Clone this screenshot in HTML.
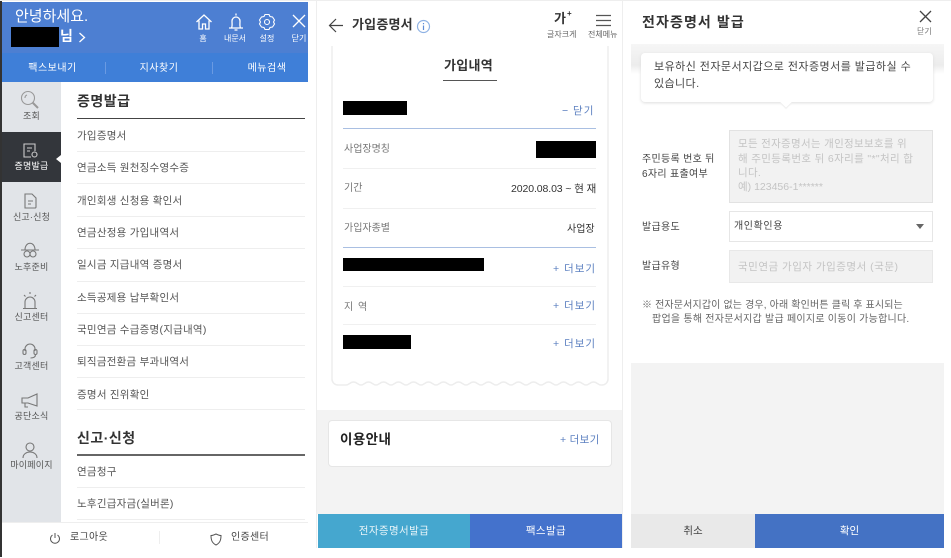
<!DOCTYPE html>
<html lang="ko"><head><meta charset="utf-8"><style>
html,body{margin:0;padding:0;background:#fff}
body{position:relative;width:951px;height:557px;overflow:hidden;font-family:"Liberation Sans","Noto Sans CJK KR",sans-serif;color:#444}
#p{position:absolute;left:0;top:0;width:951px;height:557px;filter:blur(.35px)}
#p div,#p svg{position:absolute}
.t{white-space:nowrap;line-height:1}
.c{text-align:center}
.m{left:77px;font-size:10.500px;color:#555;letter-spacing:.25px}
.l{left:77px;width:228px;height:1px;background:#eeeeee}
.s{left:2px;width:59px;text-align:center;font-size:9px;color:#555;white-space:nowrap;line-height:1;letter-spacing:.2px}
.b{background:#000}
.more{font-size:10.500px;color:#5b7fc0;white-space:nowrap;line-height:1;letter-spacing:1px}
.g{font-size:10px;color:#777;white-space:nowrap;line-height:1}
svg{fill:none}
</style></head><body><div id="p">
<!-- left panel -->
<div style="left:0;top:0;width:2px;height:557px;background:#333"></div>
<div style="left:0;top:0;width:951px;height:1px;background:#eee"></div>
<div style="left:2px;top:2px;width:306px;height:51px;background:#4d7fd2"></div>
<div style="left:2px;top:53px;width:306px;height:29px;background:#3f7fd8"></div>
<div class="t" style="left:15px;top:9px;font-size:15px;color:#fff">안녕하세요.</div>
<div class="b" style="left:11px;top:27px;width:48px;height:20px"></div>
<div class="t" style="left:60px;top:29px;font-size:14px;color:#fff;font-weight:bold">님</div>
<svg style="left:78px;top:32px" width="8" height="11" stroke="#fff" stroke-width="1.300"><path d="M1.500 1l5 4.500-5 4.500"/></svg>
<svg style="left:195px;top:13px" width="18" height="18" stroke="#fff" stroke-width="1.300"><path d="M1.500 9 9 2l7.500 7M4 7.500V16h3.500v-5h3v5H14V7.500"/></svg>
<svg style="left:227px;top:12px" width="18" height="19" stroke="#fff" stroke-width="1.300"><path d="M2 16h14M4.500 16c1-2 .5-4 .5-7a4 4 0 0 1 8 0c0 3-.5 5 .5 7M9 1.500v2M7.500 18h3"/></svg>
<svg style="left:258px;top:13px" width="18" height="18" stroke="#fff" stroke-width="1.100"><path d="M7 1.500h4l1 2 2.500.5 2 3-1 2 1 2-2 3-2.500.5-1 2H7l-1-2-2.500-.5-2-3 1-2-1-2 2-3L6 3.500z"/><circle cx="9" cy="9" r="2.500"/></svg>
<svg style="left:292px;top:14px" width="14" height="14" stroke="#fff" stroke-width="1.300"><path d="M1 1l12 12M13 1 1 13"/></svg>
<div class="t c" style="left:193px;top:35px;width:20px;font-size:8px;color:#fff">홈</div>
<div class="t c" style="left:220px;top:35px;width:30px;font-size:8px;color:#fff">내문서</div>
<div class="t c" style="left:252px;top:35px;width:30px;font-size:8px;color:#fff">설정</div>
<div class="t c" style="left:288px;top:35px;width:22px;font-size:8px;color:#fff">닫기</div>
<div class="t c" style="left:10px;top:64px;width:85px;font-size:10px;color:#fff;letter-spacing:.5px">팩스보내기</div>
<div class="t c" style="left:115px;top:64px;width:88px;font-size:10px;color:#fff;letter-spacing:.5px">지사찾기</div>
<div class="t c" style="left:224px;top:64px;width:86px;font-size:10px;color:#fff;letter-spacing:.5px">메뉴검색</div>
<div style="left:105px;top:62px;width:1px;height:12px;background:#6a9ae2"></div>
<div style="left:212px;top:62px;width:1px;height:12px;background:#6a9ae2"></div>
<!-- sidebar -->
<div style="left:2px;top:82px;width:59px;height:440px;background:#e1e4e8"></div>
<div style="left:2px;top:132px;width:59px;height:50px;background:#33363b"></div>
<div style="left:56px;top:155px;width:0;height:0;border-top:4px solid transparent;border-bottom:4px solid transparent;border-right:5px solid #fff"></div>
<svg style="left:20px;top:90px" width="20" height="20" stroke="#999" stroke-width="1.100"><circle cx="8" cy="8" r="6.500"/><path d="M5 8a3 3 0 0 1 2-3"/><path d="M12.500 12.500 18 18" stroke-width="2"/></svg>
<div class="s" style="top:112px">조회</div>
<svg style="left:22px;top:142px" width="18" height="18" stroke="#ccc" stroke-width="1.100"><path d="M9 15H2V2h11v7M5 6h5M5 9h3"/><circle cx="12.500" cy="12.500" r="2.500"/></svg>
<div class="s" style="top:162px;color:#fff">증명발급</div>
<svg style="left:23px;top:192px" width="15" height="17" stroke="#777" stroke-width="1.100"><path d="M2 2h7l4 4v9a1 1 0 0 1-1 1H2zM5 9h5M5 12h3"/></svg>
<div class="s" style="top:213px">신고·신청</div>
<svg style="left:20px;top:242px" width="20" height="17" stroke="#777" stroke-width="1.100"><path d="M1 8h18M5 8c0-9 10-9 10 0"/><circle cx="7" cy="12" r="3"/><circle cx="13" cy="12" r="3"/></svg>
<div class="s" style="top:263px">노후준비</div>
<svg style="left:20px;top:291px" width="20" height="20" stroke="#777" stroke-width="1.100"><path d="M5 17V11a5 5 0 0 1 10 0v6M3 17.500h14M10 1v2M4 4l1.500 1.500M16 4l-1.500 1.500"/></svg>
<div class="s" style="top:313px">신고센터</div>
<svg style="left:21px;top:342px" width="18" height="18" stroke="#777" stroke-width="1.100"><path d="M4 9V7a5 5 0 0 1 10 0v2"/><rect x="2" y="7.500" width="3" height="5" rx="1.500"/><rect x="13" y="7.500" width="3" height="5" rx="1.500"/><path d="M14.500 12.500c0 2.500-2 3.500-5 3.500"/></svg>
<div class="s" style="top:362px">고객센터</div>
<svg style="left:21px;top:393px" width="18" height="16" stroke="#777" stroke-width="1.100"><path d="M1 5h6l9-4v12l-9-3H1zM4 10v4h3"/></svg>
<div class="s" style="top:412px">공단소식</div>
<svg style="left:21px;top:441px" width="18" height="18" stroke="#777" stroke-width="1.100"><circle cx="9" cy="6" r="4"/><path d="M2 17c0-8 14-8 14 0"/></svg>
<div class="s" style="top:461px">마이페이지</div>
<!-- menu -->
<div class="t" style="left:77px;top:94px;font-size:14px;font-weight:bold;color:#333;letter-spacing:.5px">증명발급</div>
<div style="left:77px;top:118px;width:228px;height:1px;background:#444"></div>
<div class="t m" style="top:131px">가입증명서</div><div class="l" style="top:151px"></div>
<div class="t m" style="top:163px">연금소득 원천징수영수증</div><div class="l" style="top:183px"></div>
<div class="t m" style="top:196px">개인회생 신청용 확인서</div><div class="l" style="top:216px"></div>
<div class="t m" style="top:228px">연금산정용 가입내역서</div><div class="l" style="top:248px"></div>
<div class="t m" style="top:260px">일시금 지급내역 증명서</div><div class="l" style="top:281px"></div>
<div class="t m" style="top:293px">소득공제용 납부확인서</div><div class="l" style="top:313px"></div>
<div class="t m" style="top:325px">국민연금 수급증명(지급내역)</div><div class="l" style="top:345px"></div>
<div class="t m" style="top:357px">퇴직금전환금 부과내역서</div><div class="l" style="top:377px"></div>
<div class="t m" style="top:390px">증명서 진위확인</div><div class="l" style="top:409px"></div>
<div class="t" style="left:77px;top:431px;font-size:14px;font-weight:bold;color:#333;letter-spacing:.5px">신고·신청</div>
<div style="left:77px;top:454px;width:228px;height:2px;background:#666"></div>
<div class="t m" style="top:467px">연금청구</div><div class="l" style="top:487px"></div>
<div class="t m" style="top:499px">노후긴급자금(실버론)</div><div class="l" style="top:519px"></div>
<div style="left:2px;top:522px;width:306px;height:35px;background:#fff;border-top:1px solid #eee"></div>
<svg style="left:49px;top:532px" width="12" height="13" stroke="#555" stroke-width="1"><path d="M6 1v5M3.500 3a4.500 4.500 0 1 0 5 0"/></svg>
<div class="t" style="left:70px;top:533px;font-size:10px;color:#444;letter-spacing:.3px">로그아웃</div>
<div style="left:159px;top:531px;width:1px;height:13px;background:#eee"></div>
<svg style="left:210px;top:533px" width="12" height="13" stroke="#555" stroke-width="1"><path d="M6 1c2 1 3 1.500 5 1.500C11 7 10 10 6 12 2 10 1 7 1 2.500 3 2.500 4 2 6 1z"/></svg>
<div class="t" style="left:231px;top:533px;font-size:10px;color:#444;letter-spacing:.3px">인증센터</div>

<!-- middle panel -->
<div style="left:316px;top:0;width:1px;height:548px;background:#eee"></div>
<div style="left:622px;top:0;width:1px;height:548px;background:#eee"></div>
<svg style="left:328px;top:18px" width="16" height="15" stroke="#444" stroke-width="1.200"><path d="M15 7.500H1.500M8 1 1.500 7.500 8 14"/></svg>
<div class="t" style="left:352px;top:18px;font-size:13px;font-weight:bold;color:#333;letter-spacing:.2px">가입증명서</div>
<svg style="left:416px;top:19px" width="15" height="15" stroke="#8fb2e4" stroke-width="1.200"><circle cx="7.500" cy="7.500" r="6"/><path d="M7.500 6.500v4.500M7.500 4v1.200" stroke="#5e8cd6"/></svg>
<div class="t" style="left:554px;top:12px;font-size:13px;font-weight:bold;color:#333">가</div>
<div class="t" style="left:567px;top:10px;font-size:8px;font-weight:bold;color:#333">+</div>
<div class="t" style="left:547px;top:31px;font-size:8px;color:#666">글자크게</div>
<svg style="left:596px;top:14px" width="15" height="13" stroke="#555" stroke-width="1.300"><path d="M0 1.500h15M0 6.500h15M0 11.500h15"/></svg>
<div class="t" style="left:588px;top:31px;font-size:8px;color:#666">전체메뉴</div>
<svg style="left:325px;top:40px" width="290" height="350" stroke="#ededed" stroke-width="1.500"><path d="M7 6V339a6 6 0 0 0 6 6h8c3 0 4-3 7.500-3s4.500 3 7.500 3c3 0 4-3 7.500-3s4.500 3 7.500 3c3 0 4-3 7.500-3s4.500 3 7.500 3c3 0 4-3 7.500-3s4.500 3 7.500 3c3 0 4-3 7.500-3s4.500 3 7.500 3c3 0 4-3 7.500-3s4.500 3 7.500 3c3 0 4-3 7.500-3s4.500 3 7.500 3c3 0 4-3 7.500-3s4.500 3 7.500 3c3 0 4-3 7.500-3s4.500 3 7.500 3c3 0 4-3 7.500-3s4.500 3 7.500 3c3 0 4-3 7.500-3s4.500 3 7.500 3c3 0 4-3 7.500-3s4.500 3 7.500 3c3 0 4-3 7.500-3s4.500 3 7.500 3c3 0 4-3 7.500-3s4.500 3 7.500 3c3 0 4-3 7.500-3s4.500 3 7.500 3c3 0 4-3 7.500-3s4.500 3 7.500 3c3 0 4-3 7.500-3s4.500 3 7.500 3h1a6 6 0 0 0 6-6V6"/></svg>
<div class="t" style="left:444px;top:59px;font-size:13px;font-weight:bold;color:#333;letter-spacing:.3px">가입내역</div>
<div style="left:443px;top:80px;width:54px;height:1px;background:#555"></div>
<div class="b" style="left:343px;top:101px;width:64px;height:14px"></div>
<div class="more" style="left:562px;top:106px">− 닫기</div>
<div style="left:343px;top:128px;width:253px;height:1px;background:#a9bfe2"></div>
<div class="g" style="left:344px;top:145px">사업장명칭</div>
<div class="b" style="left:536px;top:141px;width:60px;height:17px"></div>
<div style="left:343px;top:168px;width:253px;height:1px;background:#f0f0f0"></div>
<div class="g" style="left:344px;top:184px">기간</div>
<div class="t" style="left:511px;top:184px;font-size:10.500px;color:#333;letter-spacing:-.1px">2020.08.03 ~ 현 재</div>
<div style="left:343px;top:208px;width:253px;height:1px;background:#f0f0f0"></div>
<div class="g" style="left:344px;top:224px">가입자종별</div>
<div class="t" style="left:567px;top:225px;font-size:10px;color:#333">사업장</div>
<div style="left:343px;top:247px;width:253px;height:1px;background:#a9bfe2"></div>
<div class="b" style="left:343px;top:258px;width:141px;height:13px"></div>
<div class="more" style="left:553px;top:264px">+ 더보기</div>
<div style="left:343px;top:286px;width:253px;height:1px;background:#f0f0f0"></div>
<div class="g" style="left:344px;top:303px;letter-spacing:1px">지 역</div>
<div class="more" style="left:553px;top:301px">+ 더보기</div>
<div style="left:343px;top:324px;width:253px;height:1px;background:#f0f0f0"></div>
<div class="b" style="left:343px;top:335px;width:68px;height:14px"></div>
<div class="more" style="left:553px;top:339px">+ 더보기</div>
<div style="left:317px;top:410px;width:305px;height:104px;background:#f3f3f3"></div>
<div style="left:328px;top:420px;width:284px;height:47px;background:#fff;border:1px solid #e6e6e6;border-radius:4px;box-sizing:border-box"></div>
<div class="t" style="left:340px;top:433px;font-size:13.500px;font-weight:bold;color:#222;letter-spacing:.4px">이용안내</div>
<div class="t" style="left:560px;top:435px;font-size:10.500px;color:#5b7fc0;letter-spacing:.3px">+ 더보기</div>
<div class="t c" style="left:318px;top:514px;width:152px;height:34px;line-height:34px;background:#45a7cf;color:#e8f4f8;font-size:10.500px;letter-spacing:.4px">전자증명서발급</div>
<div class="t c" style="left:470px;top:514px;width:152px;height:34px;line-height:34px;background:#4472cc;color:#fff;font-size:10.500px;letter-spacing:.4px">팩스발급</div>

<!-- right panel -->
<div class="t" style="left:642px;top:15px;font-size:14px;font-weight:bold;color:#333;letter-spacing:1.100px">전자증명서 발급</div>
<svg style="left:919px;top:10px" width="13" height="13" stroke="#444" stroke-width="1.300"><path d="M1 1l11 11M12 1 1 12"/></svg>
<div class="t" style="left:917px;top:28px;font-size:8px;color:#777">닫기</div>
<div style="left:631px;top:44px;width:313px;height:30px;background:linear-gradient(#f6f6f6,#ececec 70%,#fff)"></div>
<div style="left:641px;top:53px;width:292px;height:49px;background:#fff;border-radius:4px;box-shadow:0 1px 3px #ddd"></div>
<div style="left:782px;top:98px;width:8px;height:8px;background:#fff;transform:rotate(45deg);box-shadow:1px 1px 1px #eee"></div>
<div class="t" style="left:654px;top:62px;font-size:11px;color:#444;letter-spacing:.45px">보유하신 전자문서지갑으로 전자증명서를 발급하실 수</div>
<div class="t" style="left:654px;top:79px;font-size:11px;color:#444;letter-spacing:.4px">있습니다.</div>
<div style="left:729px;top:130px;width:204px;height:73px;background:#f2f2f2;border:1px solid #e2e2e2;box-sizing:border-box"></div>
<div class="t" style="left:738px;top:139px;font-size:10.500px;color:#c4c4c4;letter-spacing:.3px">모든 전자증명서는 개인정보보호를 위</div>
<div class="t" style="left:738px;top:154px;font-size:10.500px;color:#c4c4c4;letter-spacing:.35px">해 주민등록번호 뒤 6자리를 "*"처리 합</div>
<div class="t" style="left:738px;top:168px;font-size:10.500px;color:#c4c4c4;letter-spacing:.3px">니다.</div>
<div class="t" style="left:738px;top:182px;font-size:10.500px;color:#c4c4c4">예) 123456-1******</div>
<div class="t" style="left:642px;top:155px;font-size:10px;color:#444;letter-spacing:.3px">주민등록 번호 뒤</div>
<div class="t" style="left:642px;top:170px;font-size:10px;color:#444;letter-spacing:.3px">6자리 표출여부</div>
<div class="t" style="left:642px;top:223px;font-size:10px;color:#444;letter-spacing:.3px">발급용도</div>
<div style="left:729px;top:211px;width:204px;height:31px;background:#fff;border:1px solid #e6e6e6;box-sizing:border-box"></div>
<div class="t" style="left:734px;top:222px;font-size:10px;color:#444;letter-spacing:.6px">개인확인용</div>
<div style="left:916px;top:224px;width:0;height:0;border-left:4px solid transparent;border-right:4px solid transparent;border-top:5px solid #666"></div>
<div class="t" style="left:642px;top:262px;font-size:10px;color:#444;letter-spacing:.3px">발급유형</div>
<div style="left:729px;top:250px;width:204px;height:33px;background:#f2f2f2;border:1px solid #e8e8e8;box-sizing:border-box"></div>
<div class="t" style="left:738px;top:262px;font-size:10.500px;color:#c4c4c4;letter-spacing:.5px">국민연금 가입자 가입증명서 (국문)</div>
<div class="t" style="left:642px;top:301px;font-size:10px;color:#666;letter-spacing:.15px">※ 전자문서지갑이 없는 경우, 아래 확인버튼 클릭 후 표시되는</div>
<div class="t" style="left:652px;top:315px;font-size:10px;color:#666;letter-spacing:.25px">팝업을 통해 전자문서지갑 발급 페이지로 이동이 가능합니다.</div>
<div style="left:631px;top:363px;width:313px;height:151px;background:#f3f3f3"></div>
<div class="t c" style="left:631px;top:514px;width:124px;height:34px;line-height:34px;background:#e9e9e9;color:#444;font-size:10.500px">취소</div>
<div class="t c" style="left:755px;top:514px;width:189px;height:34px;line-height:34px;background:#4472c4;color:#fff;font-size:10.500px">확인</div>
</div></body></html>
